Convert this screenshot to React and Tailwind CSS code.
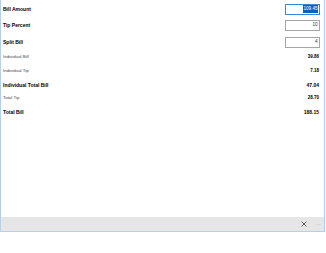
import React from "react";

const inputs = [
  { label: "Bill Amount", value: "109.45", focused: true, h: "h-[16px]" },
  { label: "Tip Percent", value: "10", h: "h-[17px]" },
  { label: "Split Bill", value: "4", h: "h-[16px]" },
];

const results = [
  { label: "Individual Bill", value: "39.86", big: false, h: "h-[15px]" },
  { label: "Individual Tip", value: "7.18", big: false, h: "h-[13px]" },
  { label: "Individual Total Bill", value: "47.04", big: true, h: "h-[14px]" },
  { label: "Total Tip", value: "28.70", big: false, h: "h-[13px]" },
  { label: "Total Bill", value: "188.15", big: true, h: "h-[14px]" },
];

export default function App() {
  return (
    <div className="w-[326px] h-[253px] bg-white font-['Liberation_Sans',Arial,sans-serif]">
      <div className="w-[325px] h-[232px] flex flex-col border-l border-r border-b border-[#b5d0ea]">
        <div className="flex flex-col pt-[1px] pl-[2px] pr-[4px]">
          {inputs.map((row) => (
            <div key={row.label} className={`flex items-center justify-between ${row.h}`}>
              <span className="text-[5px] leading-none font-bold text-black">{row.label}</span>
              <div
                className={`w-[35px] h-[11px] flex items-center justify-end pr-[1px] border ${
                  row.focused ? "border-[#3c87d0]" : "border-[#a6a6a6]"
                }`}
              >
                <span
                  className={`text-[4.6px] leading-none px-[0.5px] py-[1.5px] ${
                    row.focused ? "bg-[#0a5fc4] text-white" : "text-[#333]"
                  }`}
                >
                  {row.value}
                </span>
              </div>
            </div>
          ))}
          {results.map((row) => (
            <div key={row.label} className={`flex items-center justify-between pr-[1px] ${row.h}`}>
              <span
                className={
                  row.big
                    ? "text-[5px] leading-none font-bold text-black"
                    : "text-[4.4px] leading-none text-[#444]"
                }
              >
                {row.label}
              </span>
              <span className={`${row.big ? "text-[5px]" : "text-[4.5px]"} leading-none font-bold text-black`}>
                {row.value}
              </span>
            </div>
          ))}
        </div>
        <div className="flex-1" />
        <div className="h-[14px] bg-[#e6e6e6] flex items-center justify-end">
          <svg width="6" height="6" viewBox="0 0 6 6" className="mr-[9px]">
            <path d="M0.5 0.5L5.5 5.5M5.5 0.5L0.5 5.5" stroke="#555" strokeWidth="0.9" />
          </svg>
          <span className="mr-[3px] text-[5px] leading-none text-[#999]">···</span>
        </div>
      </div>
    </div>
  );
}
